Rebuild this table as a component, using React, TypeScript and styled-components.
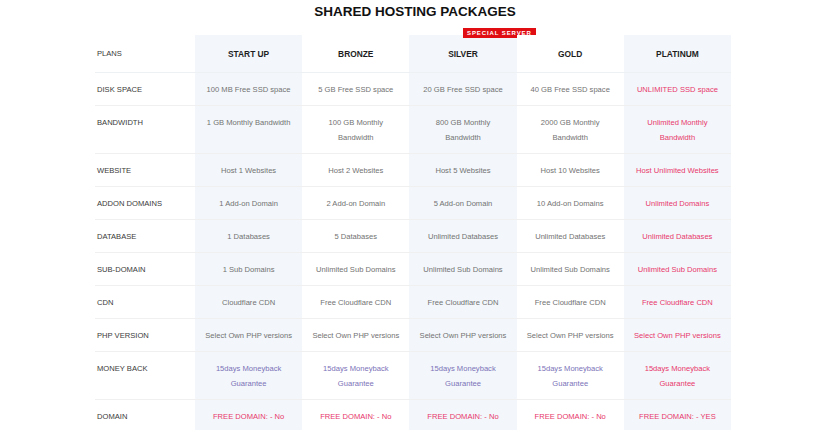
import React from 'react'
import styled, { createGlobalStyle } from 'styled-components';

const GlobalStyle = createGlobalStyle`
  body {
    margin: 0;
    background: #fff;
    font-family: "Liberation Sans", Arial, sans-serif;
  }
`;

const TINT = '#f3f7fb';
const PINK = '#e8376b';
const PURPLE = '#7b72b8';

const Page = styled.div`
  width: 640px;
  margin: 0 auto;
`;

const Title = styled.h1`
  margin: 0;
  font-size: 13.5px;
  line-height: 24px;
  font-weight: 700;
  color: #111;
  text-align: center;
`;

const Table = styled.div`
  margin-top: 11px;
  width: 636px;
`;

const Row = styled.div<{ $head?: boolean }>`
  display: grid;
  grid-template-columns: 100px repeat(5, 1fr);
  border-bottom: 1px solid ${p => p.$head ? '#eef1f4' : '#f0f0f0'};
`;

const Label = styled.div<{ $head?: boolean }>`
  padding: ${p => p.$head ? '0 2px' : '9px 2px 8px'};
  font-size: 7.6px;
  line-height: 15px;
  color: #3a3a3a;
  display: ${p => p.$head ? 'flex' : 'block'};
  align-items: center;
`;

const Cell = styled.div<{ $tint?: boolean; $tone?: 'pink' | 'purple' }>`
  padding: 9px 10px 8px;
  background: ${p => p.$tint ? TINT : '#fff'};
  font-size: 7.6px;
  line-height: 15px;
  text-align: center;
  color: ${p => p.$tone === 'pink' ? PINK : p.$tone === 'purple' ? PURPLE : '#727272'};
`;

const HeadCell = styled.div<{ $tint?: boolean }>`
  position: relative;
  height: 37px;
  display: flex;
  align-items: center;
  justify-content: center;
  background: ${p => p.$tint ? TINT : '#fff'};
  font-size: 8.4px;
  font-weight: 700;
  color: #1e1e1e;
`;

const Badge = styled.span`
  position: absolute;
  top: -7px;
  left: 50%;
  height: 10px;
  padding: 0 4px;
  background: #e00d12;
  color: #fff;
  font-size: 6px;
  font-weight: 700;
  letter-spacing: 0.9px;
  line-height: 10px;
  white-space: nowrap;
`;

type Tone = 'pink' | 'purple' | undefined;

const plans = ['START UP', 'BRONZE', 'SILVER', 'GOLD', 'PLATINUM'];
const tinted = [true, false, true, false, true];

const rows: { label: string; values: string[]; tone?: Tone }[] = [
  { label: 'DISK SPACE', values: ['100 MB Free SSD space', '5 GB Free SSD space', '20 GB Free SSD space', '40 GB Free SSD space', 'UNLIMITED SSD space'] },
  { label: 'BANDWIDTH', values: ['1 GB Monthly Bandwidth', '100 GB Monthly Bandwidth', '800 GB Monthly Bandwidth', '2000 GB Monthly Bandwidth', 'Unlimited Monthly Bandwidth'] },
  { label: 'WEBSITE', values: ['Host 1 Websites', 'Host 2 Websites', 'Host 5 Websites', 'Host 10 Websites', 'Host Unlimited Websites'] },
  { label: 'ADDON DOMAINS', values: ['1 Add-on Domain', '2 Add-on Domain', '5 Add-on Domain', '10 Add-on Domains', 'Unlimited Domains'] },
  { label: 'DATABASE', values: ['1 Databases', '5 Databases', 'Unlimited Databases', 'Unlimited Databases', 'Unlimited Databases'] },
  { label: 'SUB-DOMAIN', values: ['1 Sub Domains', 'Unlimited Sub Domains', 'Unlimited Sub Domains', 'Unlimited Sub Domains', 'Unlimited Sub Domains'] },
  { label: 'CDN', values: ['Cloudflare CDN', 'Free Cloudflare CDN', 'Free Cloudflare CDN', 'Free Cloudflare CDN', 'Free Cloudflare CDN'] },
  { label: 'PHP VERSION', values: ['Select Own PHP versions', 'Select Own PHP versions', 'Select Own PHP versions', 'Select Own PHP versions', 'Select Own PHP versions'] },
  { label: 'MONEY BACK', values: ['15days Moneyback Guarantee', '15days Moneyback Guarantee', '15days Moneyback Guarantee', '15days Moneyback Guarantee', '15days Moneyback Guarantee'], tone: 'purple' },
  { label: 'DOMAIN', values: ['FREE DOMAIN: - No', 'FREE DOMAIN: - No', 'FREE DOMAIN: - No', 'FREE DOMAIN: - No', 'FREE DOMAIN: - YES'], tone: 'pink' },
];

export default function App() {
  return (
    <Page>
      <GlobalStyle />
      <Title>SHARED HOSTING PACKAGES</Title>
      <Table>
        <Row $head>
          <Label $head>PLANS</Label>
          {plans.map((p, i) => (
            <HeadCell key={p} $tint={tinted[i]}>
              {p === 'SILVER' && <Badge>SPECIAL SERVER</Badge>}
              {p}
            </HeadCell>
          ))}
        </Row>
        {rows.map(r => (
          <Row key={r.label}>
            <Label>{r.label}</Label>
            {r.values.map((v, i) => (
              <Cell key={i} $tint={tinted[i]} $tone={i === 4 ? 'pink' : r.tone}>
                {v}
              </Cell>
            ))}
          </Row>
        ))}
      </Table>
    </Page>
  );
}
